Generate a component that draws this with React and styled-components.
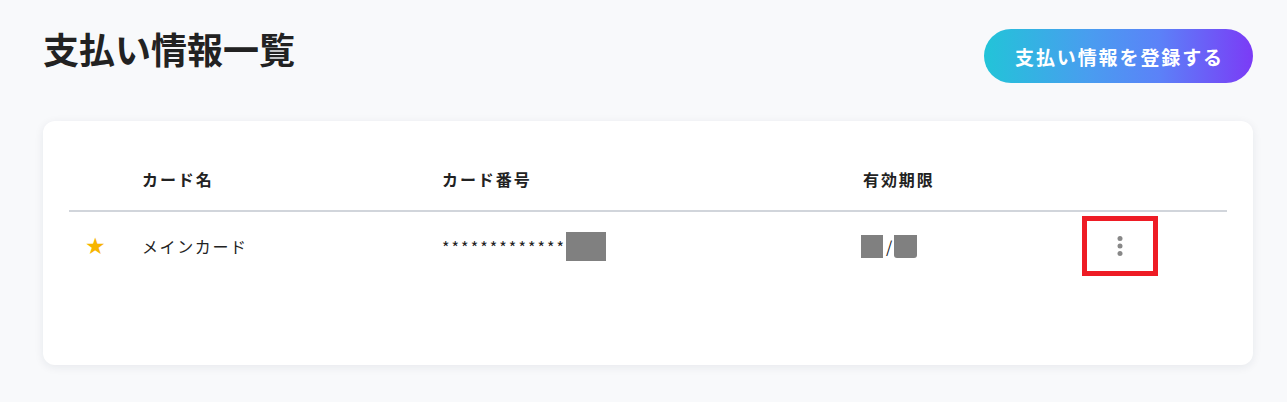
import React from "react";
import styled, { createGlobalStyle } from "styled-components";

const GlobalStyle = createGlobalStyle`
  html, body { margin: 0; padding: 0; background: #f8f9fb; }
  body {
    font-family: "Noto Sans CJK JP", "Noto Sans", sans-serif;
    color: #222;
  }
  * { box-sizing: border-box; }
`;

const Page = styled.div`
  padding: 29px 34px 36px 43px;
  min-height: 402px;
  background: #f8f9fb;
`;

const TopBar = styled.div`
  display: flex;
  justify-content: space-between;
  align-items: flex-start;
`;

const Title = styled.h1`
  margin: 0;
  font-size: 36px;
  line-height: 38px;
  font-weight: 700;
  color: #222;
  letter-spacing: 0;
`;

const PrimaryButton = styled.button`
  height: 54px;
  width: 269px;
  border: none;
  border-radius: 27px;
  background: linear-gradient(90deg, #22c4d8 0%, #4a9cf0 40%, #5b82f8 65%, #7b3bf6 100%);
  color: #fff;
  font-family: inherit;
  font-size: 19px;
  font-weight: 700;
  letter-spacing: 0.1em;
  padding: 0 0 0 2px;
  cursor: pointer;
`;

const Card = styled.section`
  margin-top: 38px;
  background: #fff;
  border-radius: 12px;
  box-shadow: 0 2px 10px rgba(30, 40, 60, 0.08);
  padding: 26px 26px;
  min-height: 244px;
`;

const cols = "57px 300px 421px 235px 1fr";

const HeaderRow = styled.div`
  display: grid;
  grid-template-columns: ${cols};
  height: 65px;
  align-items: center;
  border-bottom: 2px solid #d1d5db;
`;

const HeadCell = styled.div`
  padding-left: ${(p) => (p.$pad ? "16px" : "0")};
  font-size: 16px;
  font-weight: 700;
  letter-spacing: 0.12em;
  color: #222;
`;

const BodyRow = styled.div`
  display: grid;
  grid-template-columns: ${cols};
  height: 68px;
  align-items: center;
`;

const Cell = styled.div`
  display: flex;
  align-items: center;
  justify-content: ${(p) => (p.$center ? "center" : "flex-start")};
  padding-left: ${(p) => p.$pad || 0}px;
  font-size: 16px;
  letter-spacing: 0.1em;
  color: #222;
`;

const Star = styled.span`
  color: #f7b500;
  font-size: 23px;
  line-height: 1;
  margin-left: -3px;
  font-family: "DejaVu Sans", sans-serif;
`;

const Masked = styled.span`
  display: inline-block;
  width: ${(p) => p.$w}px;
  height: ${(p) => p.$h}px;
  background: #808080;
  border-radius: 0 0 ${(p) => p.$r || 0}px ${(p) => p.$r || 0}px;
`;

const Stars = styled.span`
  font-size: 16px;
  letter-spacing: 0.13em;
  margin-top: 2px;
`;

const Slash = styled.span`
  font-size: 16px;
  margin: 0 2px 0 3px;
  letter-spacing: 0;
`;

const MenuButton = styled.button`
  width: 76px;
  height: 60px;
  border: 5px solid #ee1c25;
  background: #fff;
  display: flex;
  align-items: center;
  justify-content: center;
  padding: 0;
  cursor: pointer;
`;

const Kebab = () => (
  <svg width="30" height="30" viewBox="0 0 24 24" fill="#888">
    <circle cx="12" cy="6" r="2" />
    <circle cx="12" cy="12" r="2" />
    <circle cx="12" cy="18" r="2" />
  </svg>
);

export default function App() {
  return (
    <>
      <GlobalStyle />
      <Page>
        <TopBar>
          <Title>支払い情報一覧</Title>
          <PrimaryButton>支払い情報を登録する</PrimaryButton>
        </TopBar>
        <Card>
          <HeaderRow>
            <HeadCell />
            <HeadCell $pad>カード名</HeadCell>
            <HeadCell $pad>カード番号</HeadCell>
            <HeadCell $pad>有効期限</HeadCell>
            <HeadCell />
          </HeaderRow>
          <BodyRow>
            <Cell $center>
              <Star>★</Star>
            </Cell>
            <Cell $pad={16}>メインカード</Cell>
            <Cell $pad={16}>
              <Stars>*************</Stars>
              <Masked $w={40} $h={29} />
            </Cell>
            <Cell $pad={14}>
              <Masked $w={22} $h={23} />
              <Slash>/</Slash>
              <Masked $w={23} $h={23} $r={3} />
            </Cell>
            <Cell>
              <MenuButton aria-label="メニュー">
                <Kebab />
              </MenuButton>
            </Cell>
          </BodyRow>
        </Card>
      </Page>
    </>
  );
}
